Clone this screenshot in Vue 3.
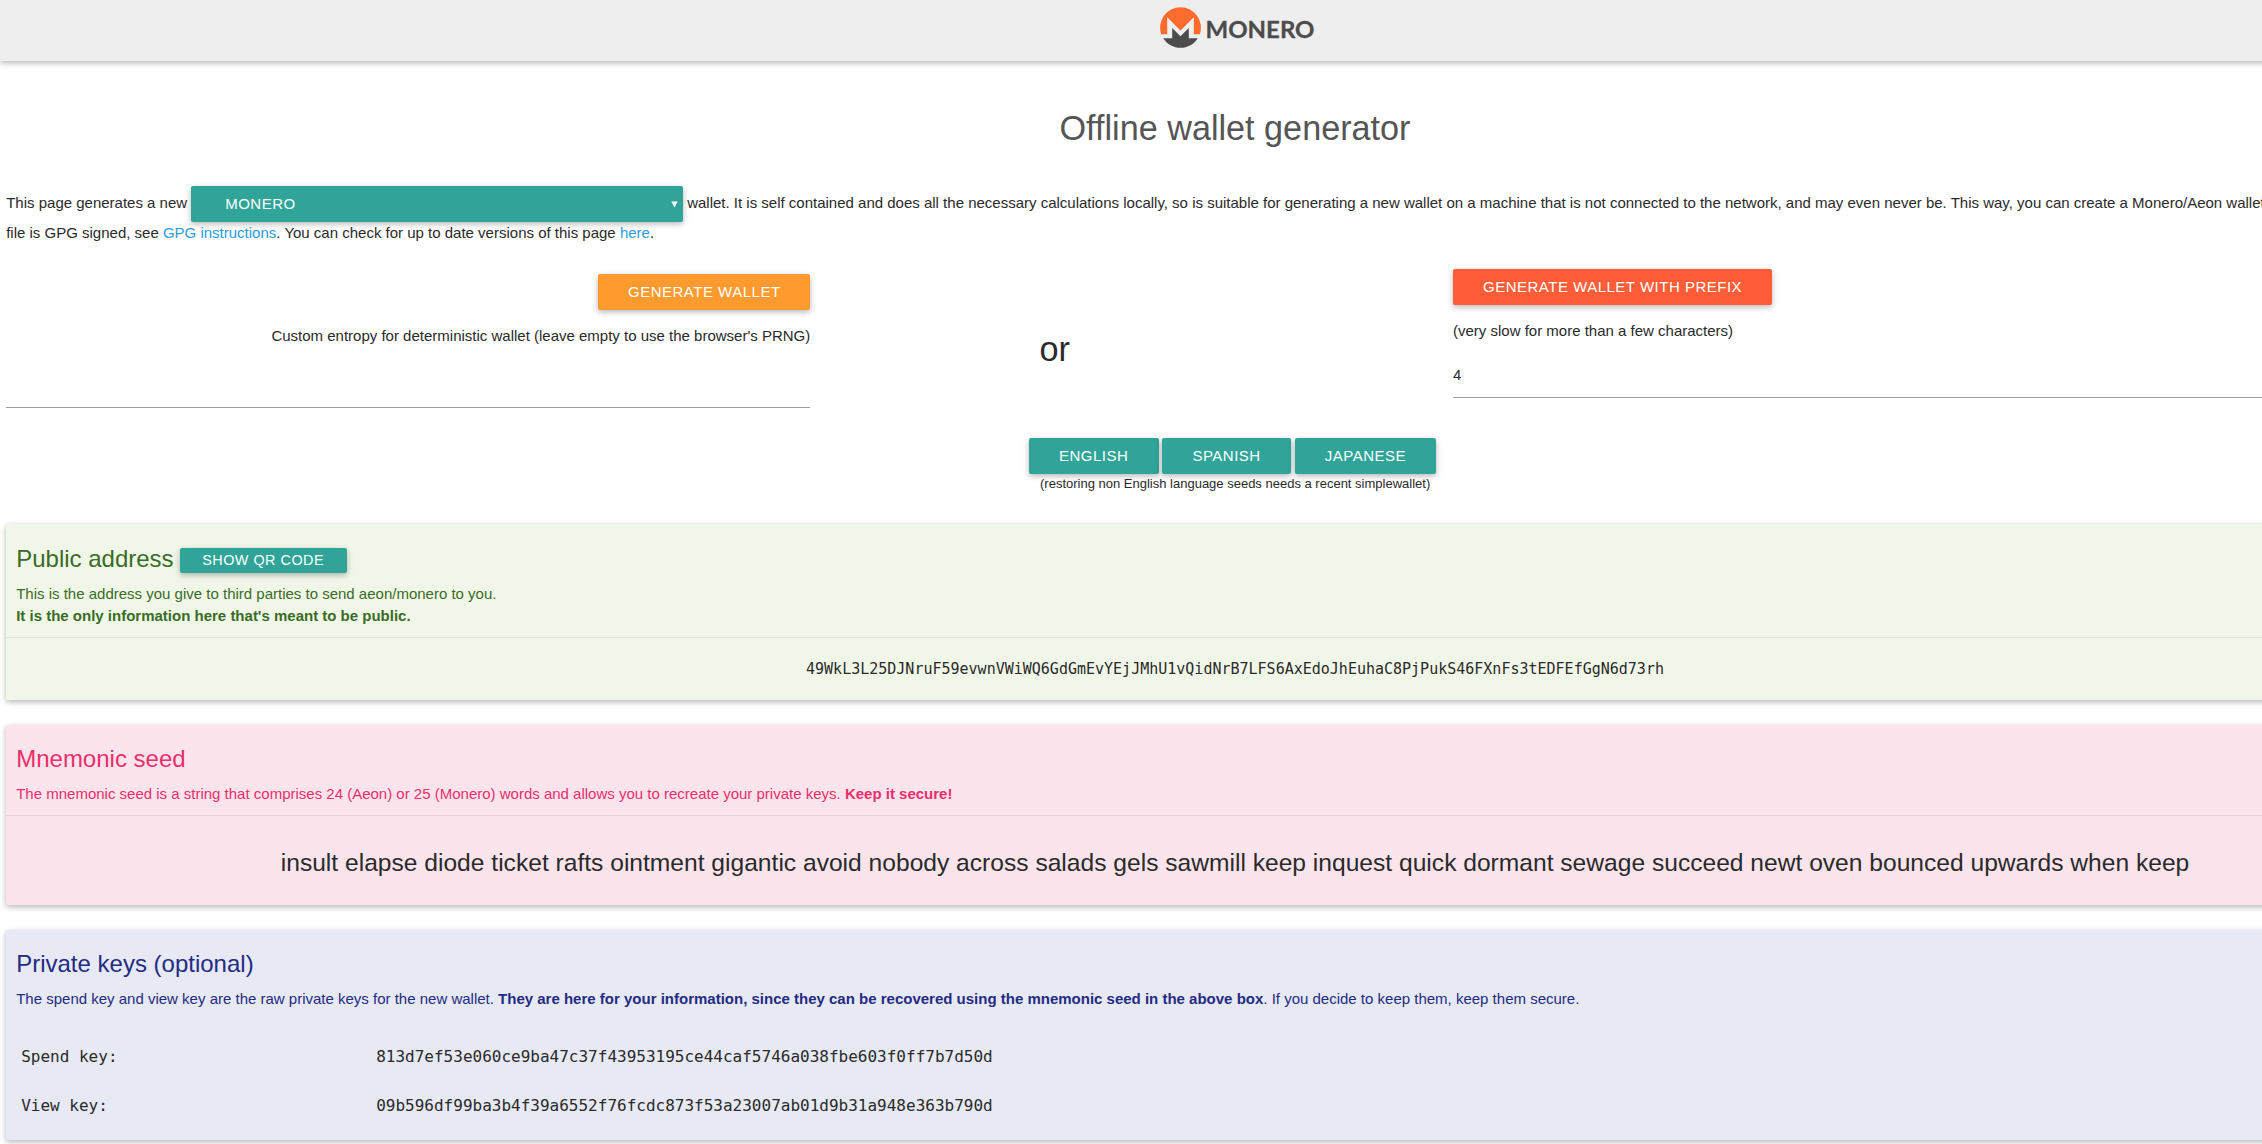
<script setup>
import { ref } from 'vue'

const network = ref('MONERO')
const prefix = ref('4')
const languages = ['ENGLISH', 'SPANISH', 'JAPANESE']
const address = '49WkL3L25DJNruF59evwnVWiWQ6GdGmEvYEjJMhU1vQidNrB7LFS6AxEdoJhEuhaC8PjPukS46FXnFs3tEDFEfGgN6d73rh'
const seed = 'insult elapse diode ticket rafts ointment gigantic avoid nobody across salads gels sawmill keep inquest quick dormant sewage succeed newt oven bounced upwards when keep'
const keys = [
  { label: 'Spend key:', value: '813d7ef53e060ce9ba47c37f43953195ce44caf5746a038fbe603f0ff7b7d50d' },
  { label: 'View key:', value: '09b596df99ba3b4f39a6552f76fcdc873f53a23007ab01d9b31a948e363b790d' }
]
</script>

<template>
  <div class="viewport">
    <div class="page">
      <header class="top">
        <svg class="logo" width="156" height="42" viewBox="0 0 156 42">
          <path fill="#ff6b2c" d="M20.5 .2A20.4 20.4 0 0 0 1.2 27.2H7.2V10.2L20.5 23.5L33.8 10.2V27.2H39.8A20.4 20.4 0 0 0 20.5 .2Z" />
          <path fill="#4c4c4c" d="M12.2 20.9V31.2H3.2A20.4 20.4 0 0 0 37.8 31.2H28.8V20.9L20.5 29.2Z" />
          <text x="45.5" y="30.8" textLength="109" lengthAdjust="spacingAndGlyphs" fill="#4c4c4c" stroke="#4c4c4c" stroke-width=".3" font-family="Lato, sans-serif" font-weight="700" font-size="23.5">MONERO</text>
        </svg>
      </header>

      <h1>Offline wallet generator</h1>

      <div class="intro">
        <div class="line first">
          <span>This page generates a new</span>
          <div class="select raised"><span>{{ network }}</span><svg width="7" height="7" viewBox="0 0 7 7"><path d="M.3 .5H6.7L3.5 6.5Z" fill="#fff" /></svg></div>
          <span>wallet. It is self contained and does all the necessary calculations locally, so is suitable for generating a new wallet on a machine that is not connected to the network, and may even never be. This way, you can create a Monero/Aeon wallet</span>
        </div>
        <div class="line">file is GPG signed, see <a>GPG instructions</a>. You can check for up to date versions of this page <a>here</a>.</div>
      </div>

      <div class="generate">
        <div class="entropy">
          <button class="btn raised amber">GENERATE WALLET</button>
          <p>Custom entropy for deterministic wallet (leave empty to use the browser's PRNG)</p>
          <div class="field"></div>
        </div>
        <div class="or">or</div>
        <div class="prefix">
          <button class="btn raised coral">GENERATE WALLET WITH PREFIX</button>
          <p>(very slow for more than a few characters)</p>
          <div class="field">{{ prefix }}</div>
        </div>
      </div>

      <div class="languages">
        <div class="buttons">
          <button v-for="l in languages" :key="l" class="btn raised">{{ l }}</button>
        </div>
        <small>(restoring non English language seeds needs a recent simplewallet)</small>
      </div>

      <section class="card raised green">
        <div class="head">
          <h2>Public address <button class="btn raised small">SHOW QR CODE</button></h2>
          <p>This is the address you give to third parties to send aeon/monero to you.<br><b>It is the only information here that's meant to be public.</b></p>
        </div>
        <div class="address">{{ address }}</div>
      </section>

      <section class="card raised pink">
        <div class="head">
          <h2>Mnemonic seed</h2>
          <p>The mnemonic seed is a string that comprises 24 (Aeon) or 25 (Monero) words and allows you to recreate your private keys. <b>Keep it secure!</b></p>
        </div>
        <div class="seed">{{ seed }}</div>
      </section>

      <section class="card raised blue">
        <div class="head">
          <h2>Private keys (optional)</h2>
          <p>The spend key and view key are the raw private keys for the new wallet. <b>They are here for your information, since they can be recovered using the mnemonic seed in the above box</b>. If you decide to keep them, keep them secure.</p>
        </div>
        <div class="keys">
          <div v-for="k in keys" :key="k.label" class="key"><span>{{ k.label }}</span><span>{{ k.value }}</span></div>
        </div>
      </section>
    </div>
  </div>
</template>

<style>
body { margin: 0; background: #fff; }
</style>

<style scoped>
* { box-sizing: border-box; }
.viewport { width: 2262px; height: 1144px; overflow: hidden; }
.page {
  width: 2470px; font: 15px/22px "Liberation Sans", Arial, sans-serif;
  color: #2a2a2a; white-space: nowrap;
}
h1, h2, p { margin: 0; font-weight: 400; }
.raised, .top { box-shadow: 0 2px 5px 0 rgba(0,0,0,.2), 0 2px 8px 0 rgba(0,0,0,.1); }
.top { height: 61px; padding: 7px 0 0 6px; background: #eee; display: flex; justify-content: center; }
.logo { display: block; }
h1 { margin-top: 48px; height: 38px; font-size: 34.2px; line-height: 38px; text-align: center; color: #555; }
.intro { margin: 39px 6.2px 0; }
.line { height: 30px; line-height: 30px; }
.first { display: flex; height: 36px; line-height: 34px; gap: 4px; }
.first + .line { margin-top: -4px; }
a { color: #2c9be2; }
.select {
  width: 492px; height: 36px; border-radius: 2px; background: #30a498; color: #fff;
  padding: 0 5px 0 34px; display: flex; align-items: center; justify-content: space-between;
  letter-spacing: .5px; line-height: 36px;
}
.btn {
  display: inline-block; border: 0; border-radius: 2px; height: 36px; padding: 0 30px;
  font: 15px/36px "Liberation Sans", Arial, sans-serif; letter-spacing: .5px; color: #fff; background: #30a498;
}
.buttons .btn { padding-right: 30.3px; }
.amber { background: #ff9a2e; width: 212px; padding: 0; }
.coral { background: #ff5d37; }
.generate { display: flex; margin-top: 21px; height: 169px; padding-left: 6px; }
.entropy { width: 804.3px; padding-top: 5px; display: flex; flex-direction: column; align-items: flex-end; }
.entropy p, .prefix p { margin-top: 15px; }
.entropy .field { width: 100%; height: 61px; }
.field { border-bottom: 1px solid #9e9e9e; }
.or { width: 642.7px; padding: 61px 0 0 229.3px; font-size: 34.2px; line-height: 38px; }
.prefix { width: 1011px; }
.prefix .btn { display: block; }
.prefix .field { height: 56px; line-height: 22px; padding-top: 22px; }
.languages { padding-left: 1029px; height: 86px; }
.buttons { display: flex; gap: 3.8px; }
small { display: block; font-size: 13px; line-height: 20px; padding-left: 11px; }
.card { margin: 0 6px; border-radius: 2px; }
.head { padding: 20px 10.2px 0; border-bottom: 1px solid rgba(0,0,0,.08); }
h2 { font-size: 24px; line-height: 28px; height: 28px; display: flex; gap: 6px; }
.head p { margin-top: 10px; }
.small { height: 25px; line-height: 25px; width: 167px; padding: 0; margin-top: 3px; font-size: 14.4px; }
.green { height: 176px; background: #f1f7e8; }
.green .head { height: 114px; padding-top: 21px; color: #3a6c25; }
.address { text-align: center; font: 15px/22px "DejaVu Sans Mono", monospace; padding-top: 20px; }
.pink { margin-top: 25px; height: 180px; background: #fbe4ec; }
.pink .head { height: 91px; color: #ea2f6c; }
.seed { font-size: 24.6px; line-height: 28px; padding-top: 33px; text-align: center; }
.blue { margin-top: 25px; height: 210px; background: #e7e9f5; }
.blue .head { border: 0; height: 91px; color: #242b82; }
.keys { padding: 11px 15.2px 0; font: 16px/49px "DejaVu Sans Mono", monospace; }
.key { display: flex; height: 49px; }
.key span:first-child { width: 355px; }
</style>
